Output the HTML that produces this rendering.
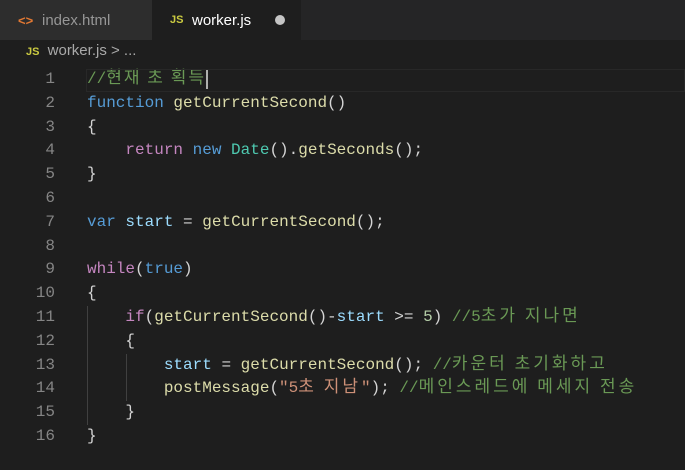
<!DOCTYPE html>
<html><head><meta charset="utf-8"><style>
html,body{margin:0;padding:0;width:685px;height:470px;overflow:hidden;background:#1e1e1e;}
.tabs{position:absolute;left:0;top:0;width:685px;height:40px;background:#252526;}
.tab{position:absolute;top:0;height:40px;font:15px "Liberation Sans",sans-serif;line-height:41px;}
.t1{left:0;width:152px;background:#2d2d2d;color:#969696;}
.t2{left:152px;width:149px;background:#1e1e1e;color:#fff;}
.bc{position:absolute;top:42px;left:0;height:26px;line-height:26px;font:15px "Liberation Sans",sans-serif;color:#a9a9a9;}
.js{color:#cbcb41;font-weight:bold;font-size:11px;}
.code{position:absolute;top:68px;left:0;width:685px;font:16px "Liberation Mono","Noto Sans CJK KR",monospace;}
.l{height:23.8px;line-height:23.8px;white-space:pre;position:relative;overflow:visible;}
.n{display:inline-block;width:55px;text-align:right;color:#858585;margin-right:32px;}
.k{color:#569cd6}.f{color:#dcdcaa}.v{color:#9cdcfe}.c{color:#6a9955}.p{color:#c586c0}.s{color:#ce9178}.t{color:#4ec9b0}.d{color:#d4d4d4}.num{color:#b5cea8}
.kr{font-family:"Noto Sans CJK KR",sans-serif;letter-spacing:3px;line-height:10px;font-size:17px;}
.hl{position:absolute;left:86px;top:1px;width:599px;height:23px;border:1px solid #282828;box-sizing:border-box;}
.g{position:absolute;width:1px;background:#404040;}
</style></head><body>
<div class="tabs">
<div class="tab t1"><span style="position:absolute;left:18px;color:#e37933;font-weight:bold;font-size:13px">&lt;&gt;</span><span style="position:absolute;left:42px">index.html</span></div>
<div class="tab t2"><span class="js" style="position:absolute;left:18px">JS</span><span style="position:absolute;left:40px">worker.js</span><span style="position:absolute;left:123px;top:15px;width:10px;height:10px;border-radius:50%;background:#c5c5c5"></span></div>
</div>
<div class="bc"><span class="js" style="margin-left:26px">JS</span> <span style="margin-left:4px">worker.js</span> &gt; ...</div>
<div class="g" style="left:87px;top:306px;height:119px"></div>
<div class="g" style="left:126px;top:354px;height:47px"></div>
<div class="code">
<div class="l"><div class="hl"></div><span class="n">1</span><span class="c">//<span class="kr" style="letter-spacing:2px">현재 초 획득</span></span><span style="border-left:2px solid #aeafad;height:20px;display:inline-block;vertical-align:middle;line-height:10px"></span></div>
<div class="l"><span class="n">2</span><span class="k">function</span> <span class="f">getCurrentSecond</span><span class="d">()</span></div>
<div class="l"><span class="n">3</span><span class="d">{</span></div>
<div class="l"><span class="n">4</span>    <span class="p">return</span> <span class="k">new</span> <span class="t">Date</span><span class="d">().</span><span class="f">getSeconds</span><span class="d">();</span></div>
<div class="l"><span class="n">5</span><span class="d">}</span></div>
<div class="l"><span class="n">6</span></div>
<div class="l"><span class="n">7</span><span class="k">var</span> <span class="v">start</span> <span class="d">=</span> <span class="f">getCurrentSecond</span><span class="d">();</span></div>
<div class="l"><span class="n">8</span></div>
<div class="l"><span class="n">9</span><span class="p">while</span><span class="d">(</span><span class="k">true</span><span class="d">)</span></div>
<div class="l"><span class="n">10</span><span class="d">{</span></div>
<div class="l"><span class="n">11</span>    <span class="p">if</span><span class="d">(</span><span class="f">getCurrentSecond</span><span class="d">()-</span><span class="v">start</span> <span class="d">&gt;=</span> <span class="num">5</span><span class="d">)</span> <span class="c">//5<span class="kr">초가 지나면</span></span></div>
<div class="l"><span class="n">12</span>    <span class="d">{</span></div>
<div class="l"><span class="n">13</span>        <span class="v">start</span> <span class="d">=</span> <span class="f">getCurrentSecond</span><span class="d">();</span> <span class="c">//<span class="kr">카운터 초기화하고</span></span></div>
<div class="l"><span class="n">14</span>        <span class="f">postMessage</span><span class="d">(</span><span class="s">"5<span class="kr">초 지남</span>"</span><span class="d">);</span> <span class="c">//<span class="kr">메인스레드에 메세지 전송</span></span></div>
<div class="l"><span class="n">15</span>    <span class="d">}</span></div>
<div class="l"><span class="n">16</span><span class="d">}</span></div>
</div>
</body></html>
